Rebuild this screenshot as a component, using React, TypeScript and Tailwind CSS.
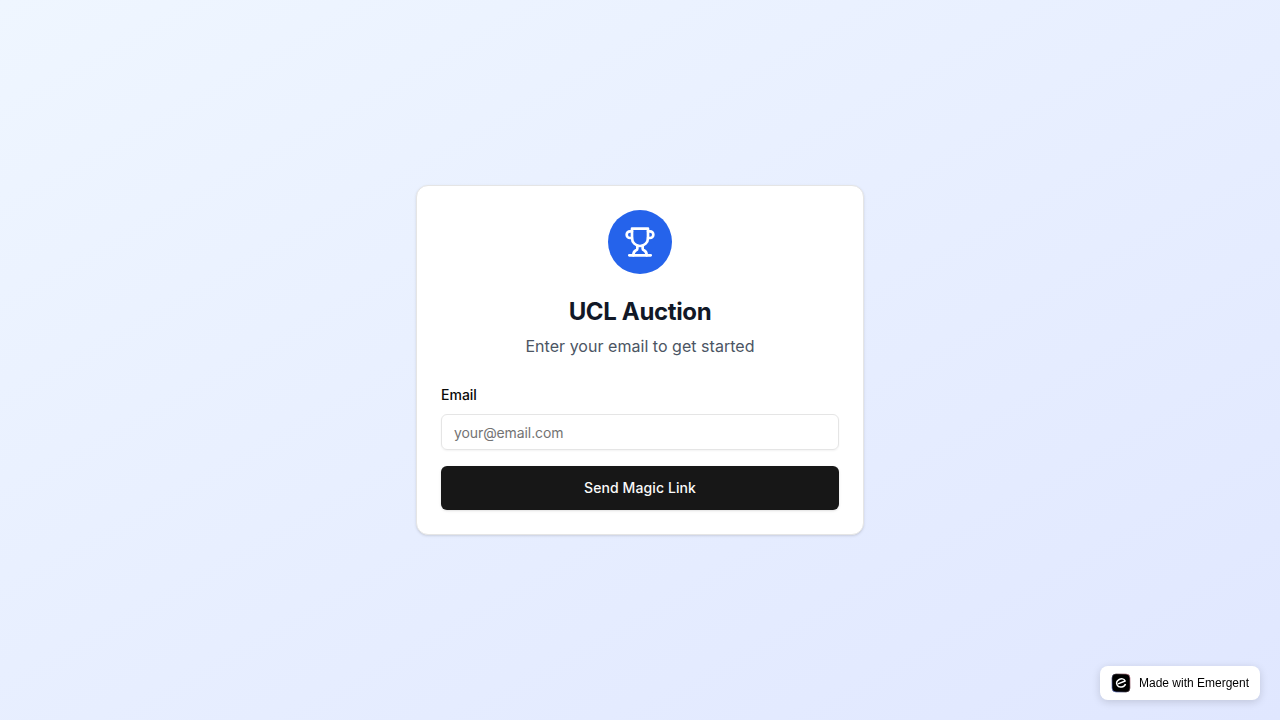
import React from "react";

function Trophy() {
  return (
    <svg className="h-8 w-8 text-white" viewBox="0 0 24 24" fill="none" stroke="currentColor" strokeWidth="2" strokeLinecap="round" strokeLinejoin="round">
      <path d="M6 9H4.5a2.5 2.5 0 0 1 0-5H6" />
      <path d="M18 9h1.5a2.5 2.5 0 0 0 0-5H18" />
      <path d="M4 22h16" />
      <path d="M10 14.66V17c0 .55-.47.98-.97 1.21C7.85 18.75 7 20.24 7 22" />
      <path d="M14 14.66V17c0 .55.47.98.97 1.21C16.15 18.75 17 20.24 17 22" />
      <path d="M18 2H6v7a6 6 0 0 0 12 0V2Z" />
    </svg>
  );
}

function EmergentLogo() {
  return (
    <svg className="h-5 w-5" viewBox="0 0 20 20" fill="none">
      <defs>
        <linearGradient id="badge-edge" x1="1" y1="16" x2="19" y2="4" gradientUnits="userSpaceOnUse">
          <stop offset="0" stopColor="#6478c8" />
          <stop offset="0.5" stopColor="#302830" />
          <stop offset="1" stopColor="#c07888" />
        </linearGradient>
      </defs>
      <rect x="1" y="1" width="18" height="18" rx="4" fill="#000" stroke="url(#badge-edge)" strokeWidth="0.7" />
      <path
        d="M7 10.9L14.2 8C13 5.6 10.3 5.3 8.2 6.5C5.9 7.8 5.1 10.2 6.2 12.2C7.8 15.1 13.2 14.6 14.5 10.9"
        stroke="#fff"
        strokeWidth="1.45"
        strokeLinejoin="round"
      />
    </svg>
  );
}

export default function App() {
  return (
    <div className="flex min-h-screen items-center justify-center bg-[linear-gradient(to_bottom_right,#eff6ff,#e0e7ff)] p-4 font-['Inter',sans-serif] antialiased">
      <div className="w-full max-w-md rounded-xl border border-[#e5e5e5] bg-white text-[#0a0a0a] shadow-[0_1px_3px_0_rgb(0_0_0/0.1),0_1px_2px_-1px_rgb(0_0_0/0.1)]">
        <div className="flex flex-col p-6 text-center">
          <div className="mx-auto mb-4 flex h-16 w-16 items-center justify-center rounded-full bg-[#2563eb]">
            <Trophy />
          </div>
          <h1 className="mt-1.5 text-2xl leading-8 font-bold tracking-[-0.35px] text-[#111827]">UCL Auction</h1>
          <p className="mt-1.5 text-base tracking-[0.03px] text-[#4b5563]">Enter your email to get started</p>
        </div>
        <form className="space-y-4 p-6 pt-0" onSubmit={(e) => e.preventDefault()}>
          <div>
            <label htmlFor="email" className="text-sm leading-none font-medium">Email</label>
            <input id="email" type="email" placeholder="your@email.com" className="mt-2 block h-9 w-full rounded-md border border-[#e5e5e5] bg-transparent px-3 py-1 text-sm tracking-[-0.1px] shadow-[0_1px_2px_0_rgb(0_0_0/0.05)] outline-none placeholder:text-[#737373]" />
          </div>
          <button type="submit" className="block h-11 w-full rounded-md bg-[#171717] text-sm font-medium tracking-[0.1px] text-[#fafafa] shadow-[0_1px_3px_0_rgb(0_0_0/0.1),0_1px_2px_-1px_rgb(0_0_0/0.1)]">Send Magic Link</button>
        </form>
      </div>
      <div className="fixed right-5 bottom-5 flex h-[34px] w-40 items-center gap-2 rounded-lg bg-white pl-[11px] font-['Liberation_Sans',sans-serif] text-xs text-black shadow-[0_2px_8px_rgb(0_0_0/0.15)]">
        <EmergentLogo />
        <span className="whitespace-nowrap">Made with Emergent</span>
      </div>
    </div>
  );
}
